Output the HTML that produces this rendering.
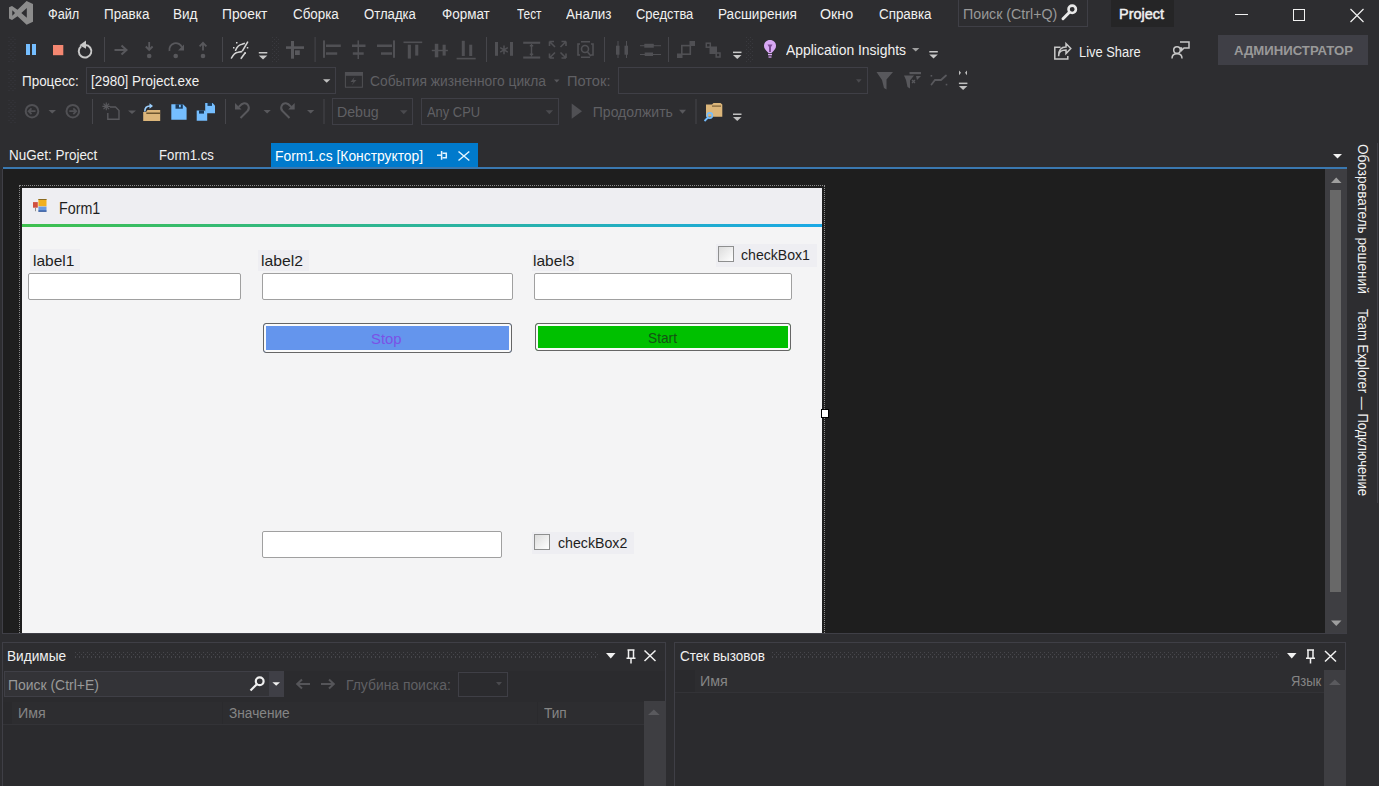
<!DOCTYPE html>
<html><head><meta charset="utf-8">
<style>
*{margin:0;padding:0;box-sizing:border-box}
html,body{width:1379px;height:786px;overflow:hidden;background:#2d2d30;font-family:"Liberation Sans",sans-serif;color:#f1f1f1;position:relative}
.a{position:absolute;white-space:nowrap}
.t{transform-origin:0 0}
svg.a{overflow:visible}
</style></head><body>
<svg class="a" style="left:0;top:0" width="40" height="28" viewBox="0 0 40 28">
<path d="M26.6 1 L33 4 V21.8 L26.6 24.8 L17.5 16.3 L12 20 L9 18.6 V7.2 L12 6 L17.5 9.7 Z M21.3 12.9 L26.8 17.8 V8.1 Z M12.3 10.2 V15.8 L15 13 Z" fill="#8c8c8c" fill-rule="evenodd"/></svg>
<div class="a" style="left:958px;top:0px;width:130px;height:27px;border:1px solid #3f3f46;border-top:none;background:#2d2d30"></div>
<div class="a" style="left:1111px;top:0px;width:63px;height:27px;background:#252526"></div>
<div class="a" style="left:1235px;top:14px;width:13px;height:1px;background:#f1f1f1"></div>
<div class="a" style="left:1293px;top:9px;width:12px;height:12px;border:1px solid #f1f1f1"></div>
<svg class="a" style="left:1350px;top:9px" width="14" height="13" viewBox="0 0 14 13"><path d="M0.5 0 L13.5 13 M13.5 0 L0.5 13" stroke="#f1f1f1" stroke-width="1.2"/></svg>
<div class="a" style="left:1218px;top:35px;width:150px;height:30px;background:#3f3f46"></div>
<div class="a" style="left:86px;top:67px;width:250px;height:27px;border:1px solid #3f3f46"></div>
<div class="a" style="left:618px;top:67px;width:250px;height:27px;border:1px solid #3f3f46"></div>
<div class="a" style="left:332px;top:98px;width:81px;height:27px;border:1px solid #3f3f46"></div>
<div class="a" style="left:421px;top:98px;width:138px;height:27px;border:1px solid #3f3f46"></div>
<div class="a" style="left:271px;top:143px;width:207px;height:25px;background:#007acc"></div>
<div class="a" style="left:3px;top:167px;width:1344px;height:2px;background:#3a78b0"></div>
<div class="a" style="left:2px;top:169px;width:1345px;height:465px;background:#3f3f46"></div>
<div class="a" style="left:3px;top:169px;width:1322px;height:464px;background:#1e1e1e"></div>
<div class="a" style="left:1325px;top:169px;width:22px;height:464px;background:#3e3e42"></div>
<div class="a" style="left:1330px;top:190px;width:11px;height:402px;background:#686868"></div>
<div class="a" style="left:19px;top:185px;width:806px;height:448px;border:1px dotted #8a8a8a;border-bottom:none"></div>
<div class="a" style="left:22px;top:188px;width:800px;height:445px;background:#f4f4f5"></div>
<div class="a" style="left:22px;top:188px;width:800px;height:36px;background:#eeeef2"></div>
<div class="a" style="left:22px;top:224px;width:800px;height:3px;background:linear-gradient(90deg,#3ec04e,#1aa8e6)"></div>
<div class="a" style="left:30px;top:249px;width:50px;height:22px;background:#eeeef2"></div>
<div class="a" style="left:258px;top:250px;width:51px;height:21px;background:#eeeef2"></div>
<div class="a" style="left:532px;top:250px;width:47px;height:21px;background:#eeeef2"></div>
<div class="a" style="left:28px;top:273px;width:213px;height:27px;background:#fff;border:1px solid #a0a0a0;border-radius:2px"></div>
<div class="a" style="left:262px;top:273px;width:251px;height:27px;background:#fff;border:1px solid #a0a0a0;border-radius:2px"></div>
<div class="a" style="left:534px;top:273px;width:258px;height:27px;background:#fff;border:1px solid #a0a0a0;border-radius:2px"></div>
<div class="a" style="left:262px;top:531px;width:240px;height:27px;background:#fff;border:1px solid #a0a0a0;border-radius:2px"></div>
<div class="a" style="left:263px;top:323px;width:249px;height:30px;background:#6495ed;border:1px solid #666;border-radius:3px;box-shadow:inset 0 0 0 2px #fafafa"></div>
<div class="a" style="left:535px;top:323px;width:256px;height:28px;background:#00c000;border:1px solid #666;border-radius:3px;box-shadow:inset 0 0 0 2px #fafafa"></div>
<div class="a" style="left:716px;top:244px;width:101px;height:23px;background:#eeeef2"></div>
<div class="a" style="left:718px;top:246px;width:16px;height:16px;background:linear-gradient(135deg,#dcdcdc,#fff);border:1px solid #8e8f8f"></div>
<div class="a" style="left:532px;top:532px;width:102px;height:22px;background:#eeeef2"></div>
<div class="a" style="left:534px;top:534px;width:16px;height:16px;background:linear-gradient(135deg,#dcdcdc,#fff);border:1px solid #8e8f8f"></div>
<div class="a" style="left:821px;top:409px;width:8px;height:9px;background:#fff;border:1px solid #000"></div>
<div class="a" style="left:2px;top:642px;width:664px;height:144px;background:#2b2b2e;border:1px solid #3f3f46;border-bottom:none"></div>
<div class="a" style="left:3px;top:643px;width:662px;height:28px;background:#2d2d30"></div>
<svg class="a" style="left:75px;top:652px" width="524" height="7"><defs><pattern id="gp" width="4" height="5" patternUnits="userSpaceOnUse"><rect x="0" y="0" width="1" height="1" fill="#46464b"/><rect x="2" y="2" width="1" height="1" fill="#46464b"/><rect x="0" y="4" width="1" height="1" fill="#46464b"/></pattern></defs><rect width="524" height="7" fill="url(#gp)"/></svg>
<div class="a" style="left:4px;top:671px;width:280px;height:26px;background:#333337;border:1px solid #3f3f46"></div>
<div class="a" style="left:269px;top:672px;width:15px;height:24px;background:#3f3f46"></div>
<div class="a" style="left:458px;top:672px;width:50px;height:25px;border:1px solid #3f3f46"></div>
<div class="a" style="left:3px;top:702px;width:641px;height:22px;background:#2a2a2d"></div>
<div class="a" style="left:12px;top:702px;width:210px;height:22px;background:#2d2d30"></div>
<div class="a" style="left:223px;top:702px;width:314px;height:22px;background:#2d2d30"></div>
<div class="a" style="left:538px;top:702px;width:106px;height:22px;background:#2d2d30"></div>
<div class="a" style="left:3px;top:724px;width:641px;height:1px;background:#333337"></div>
<div class="a" style="left:644px;top:701px;width:22px;height:85px;background:#3e3e42"></div>
<div class="a" style="left:674px;top:642px;width:672px;height:144px;background:#2b2b2e;border:1px solid #3f3f46;border-bottom:none"></div>
<div class="a" style="left:675px;top:643px;width:670px;height:27px;background:#2d2d30"></div>
<svg class="a" style="left:772px;top:652px" width="508" height="7"><rect width="508" height="7" fill="url(#gp)"/></svg>
<div class="a" style="left:675px;top:670px;width:649px;height:22px;background:#2a2a2d"></div>
<div class="a" style="left:695px;top:670px;width:595px;height:22px;background:#2d2d30"></div>
<div class="a" style="left:1290px;top:670px;width:34px;height:22px;background:#2d2d30"></div>
<div class="a" style="left:675px;top:692px;width:649px;height:1px;background:#333337"></div>
<div class="a" style="left:1324px;top:670px;width:22px;height:116px;background:#3e3e42"></div>
<svg class="a" style="left:0;top:630px" width="1379" height="156" viewBox="0 630 1379 156">
<path d="M606 653 H615.5 L610.75 658.4 Z" fill="#f1f1f1"/>
<g fill="none" stroke="#f1f1f1" stroke-width="1.5"><path d="M627.5 650 H634.5 M628.5 650 V658 M633.5 650 V658 M626.5 658.2 H635.5 M631 658.2 V663.5"/><path d="M644.5 650.5 L655.5 661 M655.5 650.5 L644.5 661"/></g>
<path d="M1287 653 H1296.5 L1291.75 658.4 Z" fill="#f1f1f1"/>
<g fill="none" stroke="#f1f1f1" stroke-width="1.5"><path d="M1307 650 H1314 M1308 650 V658 M1313 650 V658 M1306 658.2 H1315 M1310.5 658.2 V663.5"/><path d="M1325 651 L1336 661.5 M1336 651 L1325 661.5"/></g>
<g fill="none" stroke="#f0f0f0" stroke-width="2.2"><circle cx="259.7" cy="681.2" r="3.9"/><path d="M256.8 684.2 L250.5 690.5"/></g>
<path d="M272.4 682.2 H280 L276.2 685.8 Z" fill="#f1f1f1"/>
<path d="M310 684 H297.5 M302 679.5 L297.2 684 L302 688.5" fill="none" stroke="#555559" stroke-width="2"/>
<path d="M321 684 H333.5 M329 679.5 L333.8 684 L329 688.5" fill="none" stroke="#555559" stroke-width="2"/>
<path d="M496 682 H502 L499 685.5 Z" fill="#4a4a4e"/>
<path d="M648 715 H659.7 L653.85 709.5 Z" fill="#5a5a5e"/>
<path d="M1329 685 H1340.7 L1334.85 679.5 Z" fill="#5a5a5e"/>
</svg>
<svg class="a" style="left:0;top:0" width="1379" height="130" viewBox="0 0 1379 130"><rect x="8.5" y="37" width="1" height="1" fill="#39393e"/><rect x="12.5" y="37" width="1" height="1" fill="#39393e"/><rect x="10.5" y="39" width="1" height="1" fill="#39393e"/><rect x="14.5" y="39" width="1" height="1" fill="#39393e"/><rect x="8.5" y="41" width="1" height="1" fill="#39393e"/><rect x="12.5" y="41" width="1" height="1" fill="#39393e"/><rect x="10.5" y="43" width="1" height="1" fill="#39393e"/><rect x="14.5" y="43" width="1" height="1" fill="#39393e"/><rect x="8.5" y="45" width="1" height="1" fill="#39393e"/><rect x="12.5" y="45" width="1" height="1" fill="#39393e"/><rect x="10.5" y="47" width="1" height="1" fill="#39393e"/><rect x="14.5" y="47" width="1" height="1" fill="#39393e"/><rect x="8.5" y="49" width="1" height="1" fill="#39393e"/><rect x="12.5" y="49" width="1" height="1" fill="#39393e"/><rect x="10.5" y="51" width="1" height="1" fill="#39393e"/><rect x="14.5" y="51" width="1" height="1" fill="#39393e"/><rect x="8.5" y="53" width="1" height="1" fill="#39393e"/><rect x="12.5" y="53" width="1" height="1" fill="#39393e"/><rect x="10.5" y="55" width="1" height="1" fill="#39393e"/><rect x="14.5" y="55" width="1" height="1" fill="#39393e"/><rect x="8.5" y="57" width="1" height="1" fill="#39393e"/><rect x="12.5" y="57" width="1" height="1" fill="#39393e"/><rect x="10.5" y="59" width="1" height="1" fill="#39393e"/><rect x="14.5" y="59" width="1" height="1" fill="#39393e"/><rect x="8.5" y="61" width="1" height="1" fill="#39393e"/><rect x="12.5" y="61" width="1" height="1" fill="#39393e"/><rect x="272" y="37" width="1" height="1" fill="#39393e"/><rect x="276" y="37" width="1" height="1" fill="#39393e"/><rect x="274" y="39" width="1" height="1" fill="#39393e"/><rect x="278" y="39" width="1" height="1" fill="#39393e"/><rect x="272" y="41" width="1" height="1" fill="#39393e"/><rect x="276" y="41" width="1" height="1" fill="#39393e"/><rect x="274" y="43" width="1" height="1" fill="#39393e"/><rect x="278" y="43" width="1" height="1" fill="#39393e"/><rect x="272" y="45" width="1" height="1" fill="#39393e"/><rect x="276" y="45" width="1" height="1" fill="#39393e"/><rect x="274" y="47" width="1" height="1" fill="#39393e"/><rect x="278" y="47" width="1" height="1" fill="#39393e"/><rect x="272" y="49" width="1" height="1" fill="#39393e"/><rect x="276" y="49" width="1" height="1" fill="#39393e"/><rect x="274" y="51" width="1" height="1" fill="#39393e"/><rect x="278" y="51" width="1" height="1" fill="#39393e"/><rect x="272" y="53" width="1" height="1" fill="#39393e"/><rect x="276" y="53" width="1" height="1" fill="#39393e"/><rect x="274" y="55" width="1" height="1" fill="#39393e"/><rect x="278" y="55" width="1" height="1" fill="#39393e"/><rect x="272" y="57" width="1" height="1" fill="#39393e"/><rect x="276" y="57" width="1" height="1" fill="#39393e"/><rect x="274" y="59" width="1" height="1" fill="#39393e"/><rect x="278" y="59" width="1" height="1" fill="#39393e"/><rect x="272" y="61" width="1" height="1" fill="#39393e"/><rect x="276" y="61" width="1" height="1" fill="#39393e"/><rect x="746" y="37" width="1" height="1" fill="#39393e"/><rect x="750" y="37" width="1" height="1" fill="#39393e"/><rect x="748" y="39" width="1" height="1" fill="#39393e"/><rect x="752" y="39" width="1" height="1" fill="#39393e"/><rect x="746" y="41" width="1" height="1" fill="#39393e"/><rect x="750" y="41" width="1" height="1" fill="#39393e"/><rect x="748" y="43" width="1" height="1" fill="#39393e"/><rect x="752" y="43" width="1" height="1" fill="#39393e"/><rect x="746" y="45" width="1" height="1" fill="#39393e"/><rect x="750" y="45" width="1" height="1" fill="#39393e"/><rect x="748" y="47" width="1" height="1" fill="#39393e"/><rect x="752" y="47" width="1" height="1" fill="#39393e"/><rect x="746" y="49" width="1" height="1" fill="#39393e"/><rect x="750" y="49" width="1" height="1" fill="#39393e"/><rect x="748" y="51" width="1" height="1" fill="#39393e"/><rect x="752" y="51" width="1" height="1" fill="#39393e"/><rect x="746" y="53" width="1" height="1" fill="#39393e"/><rect x="750" y="53" width="1" height="1" fill="#39393e"/><rect x="748" y="55" width="1" height="1" fill="#39393e"/><rect x="752" y="55" width="1" height="1" fill="#39393e"/><rect x="746" y="57" width="1" height="1" fill="#39393e"/><rect x="750" y="57" width="1" height="1" fill="#39393e"/><rect x="748" y="59" width="1" height="1" fill="#39393e"/><rect x="752" y="59" width="1" height="1" fill="#39393e"/><rect x="746" y="61" width="1" height="1" fill="#39393e"/><rect x="750" y="61" width="1" height="1" fill="#39393e"/><rect x="8.5" y="70" width="1" height="1" fill="#39393e"/><rect x="12.5" y="70" width="1" height="1" fill="#39393e"/><rect x="10.5" y="72" width="1" height="1" fill="#39393e"/><rect x="14.5" y="72" width="1" height="1" fill="#39393e"/><rect x="8.5" y="74" width="1" height="1" fill="#39393e"/><rect x="12.5" y="74" width="1" height="1" fill="#39393e"/><rect x="10.5" y="76" width="1" height="1" fill="#39393e"/><rect x="14.5" y="76" width="1" height="1" fill="#39393e"/><rect x="8.5" y="78" width="1" height="1" fill="#39393e"/><rect x="12.5" y="78" width="1" height="1" fill="#39393e"/><rect x="10.5" y="80" width="1" height="1" fill="#39393e"/><rect x="14.5" y="80" width="1" height="1" fill="#39393e"/><rect x="8.5" y="82" width="1" height="1" fill="#39393e"/><rect x="12.5" y="82" width="1" height="1" fill="#39393e"/><rect x="10.5" y="84" width="1" height="1" fill="#39393e"/><rect x="14.5" y="84" width="1" height="1" fill="#39393e"/><rect x="8.5" y="86" width="1" height="1" fill="#39393e"/><rect x="12.5" y="86" width="1" height="1" fill="#39393e"/><rect x="10.5" y="88" width="1" height="1" fill="#39393e"/><rect x="14.5" y="88" width="1" height="1" fill="#39393e"/><rect x="8.5" y="90" width="1" height="1" fill="#39393e"/><rect x="12.5" y="90" width="1" height="1" fill="#39393e"/><rect x="8.5" y="100" width="1" height="1" fill="#39393e"/><rect x="12.5" y="100" width="1" height="1" fill="#39393e"/><rect x="10.5" y="102" width="1" height="1" fill="#39393e"/><rect x="14.5" y="102" width="1" height="1" fill="#39393e"/><rect x="8.5" y="104" width="1" height="1" fill="#39393e"/><rect x="12.5" y="104" width="1" height="1" fill="#39393e"/><rect x="10.5" y="106" width="1" height="1" fill="#39393e"/><rect x="14.5" y="106" width="1" height="1" fill="#39393e"/><rect x="8.5" y="108" width="1" height="1" fill="#39393e"/><rect x="12.5" y="108" width="1" height="1" fill="#39393e"/><rect x="10.5" y="110" width="1" height="1" fill="#39393e"/><rect x="14.5" y="110" width="1" height="1" fill="#39393e"/><rect x="8.5" y="112" width="1" height="1" fill="#39393e"/><rect x="12.5" y="112" width="1" height="1" fill="#39393e"/><rect x="10.5" y="114" width="1" height="1" fill="#39393e"/><rect x="14.5" y="114" width="1" height="1" fill="#39393e"/><rect x="8.5" y="116" width="1" height="1" fill="#39393e"/><rect x="12.5" y="116" width="1" height="1" fill="#39393e"/><rect x="10.5" y="118" width="1" height="1" fill="#39393e"/><rect x="14.5" y="118" width="1" height="1" fill="#39393e"/><rect x="8.5" y="120" width="1" height="1" fill="#39393e"/><rect x="12.5" y="120" width="1" height="1" fill="#39393e"/><rect x="10.5" y="122" width="1" height="1" fill="#39393e"/><rect x="14.5" y="122" width="1" height="1" fill="#39393e"/><rect x="26" y="44" width="4" height="11" fill="#75beff"/><rect x="32" y="44" width="4" height="11" fill="#75beff"/><rect x="53" y="45" width="10.3" height="10.2" fill="#f48771"/><path d="M81.2 46.2 A6.3 6.3 0 1 0 85.2 44.9" fill="none" stroke="#c8c8c8" stroke-width="2"/><path d="M86 40.6 L86 48.8 L79.5 45.2 Z" fill="#c8c8c8"/><rect x="104" y="37" width="1" height="25" fill="#46464b"/><path d="M114.5 50 H126 M121.5 45.5 L126.5 50 L121.5 54.5" fill="none" stroke="#58585c" stroke-width="2"/><path d="M149.2 42 V50 M145.8 46.5 L149.2 50 L152.6 46.5" fill="none" stroke="#58585c" stroke-width="1.8"/><circle cx="149.2" cy="56" r="2.3" fill="#58585c"/><path d="M169.5 51 A6.5 6.5 0 0 1 182 47.5" fill="none" stroke="#58585c" stroke-width="1.8"/><path d="M184 44.5 V50.5 H178 Z" fill="#58585c"/><circle cx="175.7" cy="56" r="2.3" fill="#58585c"/><path d="M203 50.5 V43 M199.6 46.3 L203 42.8 L206.4 46.3" fill="none" stroke="#58585c" stroke-width="1.8"/><circle cx="203" cy="56" r="2.3" fill="#58585c"/><rect x="222" y="37" width="1" height="25" fill="#46464b"/><g fill="none" stroke="#d4d4d4" stroke-width="1.6" stroke-linecap="round"><path d="M231.5 58 C233 55 235 52.5 238 52.2 L241.5 51.6"/><path d="M235.6 50.2 C237 47 239 44.6 242 44.2 L244.2 43.4"/><path d="M247.6 42.2 L242.6 50.6"/><path d="M245.2 52.8 L241.2 58.3"/></g><g fill="#d4d4d4"><rect x="236" y="42" width="1.5" height="1.5"/><rect x="233" y="47" width="1.5" height="1.5"/><rect x="246.8" y="47" width="1.5" height="1.5"/><rect x="244.3" y="52.5" width="1.5" height="1.5"/></g><rect x="258.8" y="52" width="8.5" height="1.5" fill="#c8c8c8"/><path d="M258.8 55.5 H267.3 L263.05 59.5 Z" fill="#c8c8c8"/><g fill="#58585c"><rect x="291" y="41" width="3" height="17.7"/><rect x="286" y="46.3" width="18" height="2.6"/><rect x="295" y="50.3" width="4.8" height="4.7"/></g><rect x="314.6" y="37" width="1" height="25" fill="#46464b"/><g fill="#505054"><rect x="323" y="40.4" width="2" height="17.4"/><rect x="326" y="44.5" width="14.8" height="2.5"/><rect x="326" y="52.3" width="11.2" height="2.5"/></g><g fill="#505054"><rect x="357.5" y="40.4" width="1.5" height="18.6"/><rect x="352" y="44.5" width="13.5" height="2.5"/><rect x="352.8" y="52.3" width="10.9" height="2.5"/></g><g fill="#505054"><rect x="393" y="40.4" width="2" height="17.4"/><rect x="377" y="44.5" width="15" height="2.5"/><rect x="381" y="52.3" width="11" height="2.5"/></g><g fill="#505054"><rect x="403.5" y="41.5" width="18.7" height="1.6"/><rect x="407.8" y="44.7" width="3.1" height="13.9"/><rect x="415.2" y="44.7" width="3.1" height="10.9"/></g><g fill="#505054"><rect x="431.8" y="49.8" width="16.1" height="1.4"/><rect x="434.8" y="43.8" width="3.5" height="13.5"/><rect x="442.6" y="44.7" width="3.1" height="10.9"/></g><g fill="#505054"><rect x="456.6" y="57.8" width="19.1" height="1.6"/><rect x="461.8" y="40.8" width="3" height="15.2"/><rect x="469.2" y="44.7" width="3" height="11.3"/></g><rect x="486" y="37" width="1" height="25" fill="#46464b"/><g fill="#505054"><rect x="495" y="42" width="3" height="13.8"/><rect x="510" y="42" width="3" height="13.8"/></g><path d="M504 45.5 V54.3 M500.2 47.7 L507.8 52.1 M500.2 52.1 L507.8 47.7" stroke="#505054" stroke-width="1.5"/><g fill="#505054"><rect x="523.2" y="41.7" width="17" height="2.1"/><rect x="523.2" y="56.5" width="17" height="2.1"/><rect x="530.8" y="44" width="1.4" height="12.5"/><rect x="529.8" y="45" width="3.4" height="1.5"/><rect x="529.8" y="53.5" width="3.4" height="1.5"/></g><g fill="none" stroke="#505054" stroke-width="1.6"><path d="M549.5 41.5 L555 47 M549.5 41.5 H554 M549.5 41.5 V46"/><path d="M566 41.5 L560.5 47 M566 41.5 H561.5 M566 41.5 V46"/><path d="M549.5 58 L555 52.5 M549.5 58 H554 M549.5 58 V53.5"/><path d="M566 58 L560.5 52.5 M566 58 H561.5 M566 58 V53.5"/></g><g fill="none" stroke="#505054" stroke-width="1.6"><path d="M580 44 H578 V55 H580"/><path d="M591 44 H593 V55 H591"/><circle cx="585" cy="49" r="3.5"/><path d="M587.5 52 L591 56"/></g><rect x="581" y="41" width="9" height="1.5" fill="#505054"/><rect x="581" y="56.5" width="9" height="1.5" fill="#505054"/><rect x="604" y="37" width="1" height="25" fill="#46464b"/><g fill="#505054"><rect x="616" y="45.7" width="3.5" height="9"/><rect x="624.5" y="45.7" width="3.5" height="9"/><rect x="617.5" y="41" width="1" height="17"/><rect x="626" y="41" width="1" height="17"/></g><g fill="#505054"><rect x="644.3" y="43.8" width="9.5" height="3.9"/><rect x="644.7" y="52.5" width="8.3" height="3.5"/><rect x="640" y="45.2" width="21" height="1"/><rect x="640" y="54" width="21" height="1"/></g><rect x="668" y="37" width="1" height="25" fill="#46464b"/><rect x="681.8" y="45.6" width="8.5" height="8.6" fill="none" stroke="#505054" stroke-width="1.6"/><rect x="689.5" y="41" width="5.5" height="5" fill="#505054"/><rect x="677" y="53.5" width="5.5" height="4.5" fill="#505054"/><rect x="706.3" y="43.2" width="4" height="4" fill="none" stroke="#505054" stroke-width="1.5"/><rect x="709.5" y="46.5" width="7.5" height="7.5" fill="#505054"/><rect x="716.2" y="53" width="3.8" height="4" fill="none" stroke="#505054" stroke-width="1.5"/><rect x="733" y="51.6" width="8.5" height="1.5" fill="#c8c8c8"/><path d="M733 55.1 H741.5 L737.25 59.1 Z" fill="#c8c8c8"/><path d="M770 40 C766.5 40 764 42.5 764 46 C764 48.5 765.5 50 768.5 53 H771.5 C774.5 50 776 48.5 776 46 C776 42.5 773.5 40 770 40 Z" fill="#d8a8f4"/><path d="M767.5 44.5 H772.5 L771 47 V52 H769 V47 Z" fill="#7a4a92"/><rect x="768" y="53.8" width="4" height="1.5" fill="#d8a8f4"/><rect x="768.5" y="56.3" width="3" height="1.5" fill="#c090d8"/><path d="M912 48 H919.4 L915.7 51.6 Z" fill="#a0a0a0"/><rect x="929.3" y="51" width="8.5" height="1.5" fill="#c8c8c8"/><path d="M929.3 54.5 H937.8 L933.55 58.5 Z" fill="#c8c8c8"/><g fill="none" stroke="#c8c8c8" stroke-width="1.5"><path d="M1060.5 47.2 H1054.8 V59 H1067.8 V56"/><path d="M1058.6 56.2 C1058.6 51.5 1061.5 50 1066 50 V53.6 L1070.8 48.6 L1066 43.6 V47.1 C1061.2 47.1 1058.6 50.6 1058.6 56.2 Z"/></g><g fill="none" stroke="#c8c8c8" stroke-width="1.5"><circle cx="1177" cy="50" r="3.3"/><path d="M1172 58.5 C1172 54.5 1174 53.8 1177 53.8 C1180 53.8 1182 54.5 1182 58.5"/><path d="M1180 42 H1189 V48 H1184 L1181.5 50.5 V48 H1180"/></g><g fill="none" stroke="#e8e8e8" stroke-width="2.6"><circle cx="1072.2" cy="9.3" r="3.7"/><path d="M1069.2 12.5 L1063 18.7" stroke-width="3" stroke-linecap="round"/></g><path d="M323 79.3 H330.4 L326.7 82.7 Z" fill="#c0c0c0"/><rect x="345.4" y="72.6" width="17" height="14.6" fill="none" stroke="#505054" stroke-width="1"/><rect x="345" y="72" width="18" height="3.8" fill="#505054"/><path d="M354.5 77 L350.5 82 H353.5 L351.5 85.5 L356.5 80 H353.5 Z" fill="#505054"/><path d="M554 79.5 H559.5 L556.75 82.5 Z" fill="#58585c"/><path d="M856 79.3 H861.6 L858.8 82.8 Z" fill="#4a4a4e"/><path d="M876.5 72 H893 L886.5 79.5 V89.5 L884 88 L882 80 Z" fill="#58585c"/><path d="M904 75.5 H914 L910 80.5 V88.5 L907.5 87 L906 80 Z" fill="#58585c"/><rect x="909.5" y="72" width="11.5" height="2.2" fill="#58585c"/><path d="M912 80 L915 83 M915 80 L912 83" stroke="#58585c" stroke-width="1.4"/><path d="M916 76 L921 76 L917 80" fill="#58585c"/><g fill="none" stroke="#58585c" stroke-width="1.8" stroke-linecap="round"><path d="M931.5 84.5 L935 80 H939"/><path d="M937.5 80 H941 L946 75.5"/></g><rect x="930.6" y="75" width="1.6" height="1.6" fill="#58585c"/><rect x="945.7" y="83.8" width="1.6" height="1.6" fill="#58585c"/><path d="M959 70.4 L961 72.8 L959 75.2 Z M967 70.4 L965 72.8 L967 75.2 Z" fill="#c0c0c0"/><rect x="958.9" y="82.6" width="8.5" height="1.5" fill="#c0c0c0"/><path d="M958.9 86.1 H967.4 L963.15 90.1 Z" fill="#c0c0c0"/><circle cx="32" cy="111.2" r="6.3" fill="none" stroke="#505054" stroke-width="2"/><path d="M35.5 111.2 H29 M31.5 108.3 L28.6 111.2 L31.5 114.1" fill="none" stroke="#505054" stroke-width="1.8"/><path d="M48.5 110 H56.0 L52.25 113.5 Z" fill="#58585c"/><circle cx="72.8" cy="111.2" r="6.3" fill="none" stroke="#505054" stroke-width="2"/><path d="M69.3 111.2 H75.8 M73.3 108.3 L76.2 111.2 L73.3 114.1" fill="none" stroke="#505054" stroke-width="1.8"/><rect x="92" y="99" width="1" height="25" fill="#46464b"/><g stroke="#58585c" stroke-width="1.2"><path d="M106.3 102.5 V110.3 M102.4 106.4 H110.2 M103.5 103.6 L109.1 109.2 M109.1 103.6 L103.5 109.2"/></g><path d="M110 107 H115.5 L119 110.5 V119.3 H107.8 V113" fill="none" stroke="#58585c" stroke-width="1.4"/><path d="M128 110.4 H136 L132.0 113.9 Z" fill="#58585c"/><path d="M143.2 112 H146 L147.5 110 H160.2 V121.1 H143.2 Z" fill="#dcb67a"/><path d="M146.3 112.5 H160 V114 H146.3 Z" fill="#6b5530"/><path d="M144.8 111.5 C144.8 107.5 147 106 150 106" fill="none" stroke="#9cd0ff" stroke-width="1.6"/><path d="M149.5 103.2 L153 106 L149.5 108.8 Z" fill="#9cd0ff"/><path d="M171.3 104.2 H183 L186.6 107.8 V119.8 H171.3 Z" fill="#75beff"/><rect x="175.5" y="104.2" width="7.3" height="4.5" fill="#1b3a5a"/><rect x="179" y="104.8" width="1.8" height="2.5" fill="#75beff"/><path d="M205.2 102.9 H212.5 L215 105.4 V113.3 H205.2 Z" fill="#75beff"/><rect x="207.5" y="102.9" width="4.5" height="3" fill="#1b3a5a"/><path d="M196.7 110.4 H204.5 L207.2 113.1 V120.8 H196.7 Z" fill="#75beff"/><rect x="199" y="110.4" width="5" height="3.2" fill="#1b3a5a"/><rect x="225" y="99" width="1" height="25" fill="#46464b"/><path d="M240.5 118 L247.5 111 C250.5 108 248 102.8 244 103.2 C241.5 103.5 240 105.5 238.7 107" fill="none" stroke="#58585c" stroke-width="2"/><path d="M235 103 V109.5 H241.5 Z" fill="#58585c"/><path d="M263.5 110.1 H270.8 L267.15 113.39999999999999 Z" fill="#58585c"/><path d="M289.5 118 L282.5 111 C279.5 108 282 102.8 286 103.2 C288.5 103.5 290 105.5 291.3 107" fill="none" stroke="#58585c" stroke-width="2"/><path d="M294.7 103 V109.5 H288.2 Z" fill="#58585c"/><path d="M307 110.1 H314.3 L310.65 113.39999999999999 Z" fill="#58585c"/><rect x="323.5" y="99" width="1" height="25" fill="#46464b"/><path d="M400 110.3 H407.5 L403.75 114.3 Z" fill="#4a4a4e"/><path d="M545.6 110.3 H553.1 L549.35 114.3 Z" fill="#4a4a4e"/><path d="M571.7 103.6 L582 111.2 L571.7 118.7 Z" fill="#505054"/><path d="M679 109.8 H686 L682.5 113.8 Z" fill="#58585c"/><rect x="695.5" y="99" width="1" height="25" fill="#46464b"/><path d="M706 104.5 H712 L713.5 103 H720.5 L722.3 104.5 V116.7 H706 Z" fill="#dcb67a"/><rect x="712" y="105.5" width="9" height="1.2" fill="#7a6038"/><circle cx="709.8" cy="115.5" r="2.6" fill="none" stroke="#75beff" stroke-width="1.6"/><path d="M708 117.5 L704.5 121" stroke="#75beff" stroke-width="1.8"/><rect x="733" y="113.5" width="8.5" height="1.5" fill="#c0c0c0"/><path d="M733 117.0 H741.5 L737.25 121.0 Z" fill="#c0c0c0"/></svg>
<svg class="a" style="left:0;top:0" width="60" height="220"><rect x="33" y="202.1" width="4.8" height="5.6" fill="#d05040"/><rect x="35" y="207.7" width="1" height="3.5" fill="#909090"/><rect x="38.4" y="199" width="8.1" height="7.3" fill="#f0b020"/><rect x="38.4" y="199" width="8.1" height="1" fill="#8a6a20"/><rect x="38.4" y="206.6" width="8.1" height="5" fill="#6a9ae0"/><rect x="38.4" y="210.6" width="8.1" height="1" fill="#1a3a80"/></svg>
<svg class="a" style="left:0;top:0" width="480" height="170"><g fill="none" stroke="#e0f4ff" stroke-width="1.5"><path d="M437 155.2 H441.5"/><path d="M441.6 151 V159.8"/><path d="M442.5 153.2 H446.3 V157.8 H442.5"/><path d="M458.5 151.5 L469.3 160.5 M469.3 151.5 L458.5 160.5"/></g></svg>
<svg class="a" style="left:1300px;top:140px" width="79" height="500" viewBox="1300 140 79 500"><path d="M1333 154 H1342 L1337.5 158.5 Z" fill="#f1f1f1"/><path d="M1331 183 H1341.5 L1336.25 177.5 Z" fill="#9e9e9e"/><path d="M1331 620.5 H1341.5 L1336.25 626 Z" fill="#9e9e9e"/></svg>
<div class="a" style="left:1377px;top:143px;width:1px;height:360px;background:#3f3f46"></div>
<div class="a t" style="left:48.30px;top:7px;font-size:14px;line-height:14px;color:#f1f1f1;font-weight:400;transform:scaleX(0.9080);">Файл</div>
<div class="a t" style="left:103.84px;top:7px;font-size:14px;line-height:14px;color:#f1f1f1;font-weight:400;transform:scaleX(0.9590);">Правка</div>
<div class="a t" style="left:173.43px;top:7px;font-size:14px;line-height:14px;color:#f1f1f1;font-weight:400;transform:scaleX(0.9686);">Вид</div>
<div class="a t" style="left:221.82px;top:7px;font-size:14px;line-height:14px;color:#f1f1f1;font-weight:400;transform:scaleX(0.9846);">Проект</div>
<div class="a t" style="left:292.50px;top:7px;font-size:14px;line-height:14px;color:#f1f1f1;font-weight:400;transform:scaleX(0.9557);">Сборка</div>
<div class="a t" style="left:364.20px;top:7px;font-size:14px;line-height:14px;color:#f1f1f1;font-weight:400;transform:scaleX(0.9379);">Отладка</div>
<div class="a t" style="left:442.00px;top:7px;font-size:14px;line-height:14px;color:#f1f1f1;font-weight:400;transform:scaleX(0.9599);">Формат</div>
<div class="a t" style="left:516.70px;top:7px;font-size:14px;line-height:14px;color:#f1f1f1;font-weight:400;transform:scaleX(0.8460);">Тест</div>
<div class="a t" style="left:566.00px;top:7px;font-size:14px;line-height:14px;color:#f1f1f1;font-weight:400;transform:scaleX(0.9606);">Анализ</div>
<div class="a t" style="left:636.00px;top:7px;font-size:14px;line-height:14px;color:#f1f1f1;font-weight:400;transform:scaleX(0.9239);">Средства</div>
<div class="a t" style="left:717.53px;top:7px;font-size:14px;line-height:14px;color:#f1f1f1;font-weight:400;transform:scaleX(0.9695);">Расширения</div>
<div class="a t" style="left:820.20px;top:7px;font-size:14px;line-height:14px;color:#f1f1f1;font-weight:400;transform:scaleX(1.0200);">Окно</div>
<div class="a t" style="left:879.30px;top:7px;font-size:14px;line-height:14px;color:#f1f1f1;font-weight:400;transform:scaleX(0.9559);">Справка</div>
<div class="a t" style="left:963.38px;top:7px;font-size:14px;line-height:14px;color:#999999;font-weight:400;transform:scaleX(1.0155);">Поиск (Ctrl+Q)</div>
<div class="a t" style="left:1119.37px;top:7px;font-size:14px;line-height:14px;color:#f1f1f1;font-weight:400;transform:scaleX(1.0309);-webkit-text-stroke:0.45px #f1f1f1;">Project</div>
<div class="a t" style="left:786.00px;top:43px;font-size:14px;line-height:14px;color:#f1f1f1;font-weight:400;transform:scaleX(0.9948);">Application Insights</div>
<div class="a t" style="left:1078.88px;top:45px;font-size:14px;line-height:14px;color:#f1f1f1;font-weight:400;transform:scaleX(0.9207);">Live Share</div>
<div class="a t" style="left:1233.60px;top:44px;font-size:13px;line-height:13px;color:#999999;font-weight:700;transform:scaleX(1.0115);">АДМИНИСТРАТОР</div>
<div class="a t" style="left:21.74px;top:74px;font-size:14px;line-height:14px;color:#f1f1f1;font-weight:400;transform:scaleX(0.9602);">Процесс:</div>
<div class="a t" style="left:90.74px;top:74px;font-size:14px;line-height:14px;color:#f1f1f1;font-weight:400;transform:scaleX(0.9593);">[2980] Project.exe</div>
<div class="a t" style="left:370.20px;top:74px;font-size:14px;line-height:14px;color:#606064;font-weight:400;transform:scaleX(0.9854);">События жизненного цикла</div>
<div class="a t" style="left:566.95px;top:74px;font-size:14px;line-height:14px;color:#606064;font-weight:400;transform:scaleX(1.0452);">Поток:</div>
<div class="a t" style="left:336.59px;top:105px;font-size:14px;line-height:14px;color:#606064;font-weight:400;transform:scaleX(1.0109);">Debug</div>
<div class="a t" style="left:426.80px;top:105px;font-size:14px;line-height:14px;color:#606064;font-weight:400;transform:scaleX(0.9224);">Any CPU</div>
<div class="a t" style="left:592.80px;top:105px;font-size:14px;line-height:14px;color:#606064;font-weight:400;">Продолжить</div>
<div class="a t" style="left:8.54px;top:148px;font-size:14px;line-height:14px;color:#f1f1f1;font-weight:400;transform:scaleX(0.9623);">NuGet: Project</div>
<div class="a t" style="left:159.46px;top:148px;font-size:14px;line-height:14px;color:#f1f1f1;font-weight:400;transform:scaleX(0.9418);">Form1.cs</div>
<div class="a t" style="left:275.31px;top:149px;font-size:14px;line-height:14px;color:#ffffff;font-weight:400;transform:scaleX(0.9882);">Form1.cs [Конструктор]</div>
<div class="a t" style="left:58.61px;top:201px;font-size:16px;line-height:16px;color:#1e1e1e;font-weight:400;transform:scaleX(0.8935);">Form1</div>
<div class="a t" style="left:33.27px;top:253px;font-size:15px;line-height:15px;color:#1e1e1e;font-weight:400;transform:scaleX(1.0338);">label1</div>
<div class="a t" style="left:261.15px;top:253px;font-size:15px;line-height:15px;color:#1e1e1e;font-weight:400;transform:scaleX(1.0493);">label2</div>
<div class="a t" style="left:533.26px;top:253px;font-size:15px;line-height:15px;color:#1e1e1e;font-weight:400;transform:scaleX(1.0364);">label3</div>
<div class="a t" style="left:371.30px;top:331px;font-size:15px;line-height:15px;color:#7b52e6;font-weight:400;transform:scaleX(0.9897);">Stop</div>
<div class="a t" style="left:647.70px;top:330px;font-size:15px;line-height:15px;color:#145214;font-weight:400;transform:scaleX(0.9136);">Start</div>
<div class="a t" style="left:741.40px;top:247px;font-size:15px;line-height:15px;color:#1e1e1e;font-weight:400;transform:scaleX(0.9393);">checkBox1</div>
<div class="a t" style="left:557.50px;top:535px;font-size:15px;line-height:15px;color:#1e1e1e;font-weight:400;transform:scaleX(0.9448);">checkBox2</div>
<div class="a t" style="left:6.63px;top:649px;font-size:14px;line-height:14px;color:#f1f1f1;font-weight:400;transform:scaleX(0.9743);">Видимые</div>
<div class="a t" style="left:8.40px;top:678px;font-size:14px;line-height:14px;color:#999999;font-weight:400;transform:scaleX(0.9952);">Поиск (Ctrl+E)</div>
<div class="a t" style="left:346.31px;top:678px;font-size:14px;line-height:14px;color:#606064;font-weight:400;transform:scaleX(0.9916);">Глубина поиска:</div>
<div class="a t" style="left:18.28px;top:706px;font-size:14px;line-height:14px;color:#858585;font-weight:400;transform:scaleX(1.0161);">Имя</div>
<div class="a t" style="left:228.70px;top:706px;font-size:14px;line-height:14px;color:#858585;font-weight:400;transform:scaleX(0.9776);">Значение</div>
<div class="a t" style="left:543.80px;top:706px;font-size:14px;line-height:14px;color:#858585;font-weight:400;transform:scaleX(0.9755);">Тип</div>
<div class="a t" style="left:679.70px;top:649px;font-size:14px;line-height:14px;color:#f1f1f1;font-weight:400;transform:scaleX(0.9626);">Стек вызовов</div>
<div class="a t" style="left:700.28px;top:674px;font-size:14px;line-height:14px;color:#858585;font-weight:400;transform:scaleX(1.0200);">Имя</div>
<div class="a t" style="left:1291.00px;top:674px;font-size:14px;line-height:14px;color:#858585;font-weight:400;transform:scaleX(0.9228);">Язык</div>
<div class="a t" style="left:1370px;top:144.00px;font-size:14px;line-height:14px;color:#f1f1f1;font-weight:400;transform:rotate(90deg) scaleX(0.9716)">Обозреватель решений</div>
<div class="a t" style="left:1370px;top:309.00px;font-size:14px;line-height:14px;color:#f1f1f1;font-weight:400;transform:rotate(90deg) scaleX(0.9318)">Team Explorer — Подключение</div>
</body></html>
